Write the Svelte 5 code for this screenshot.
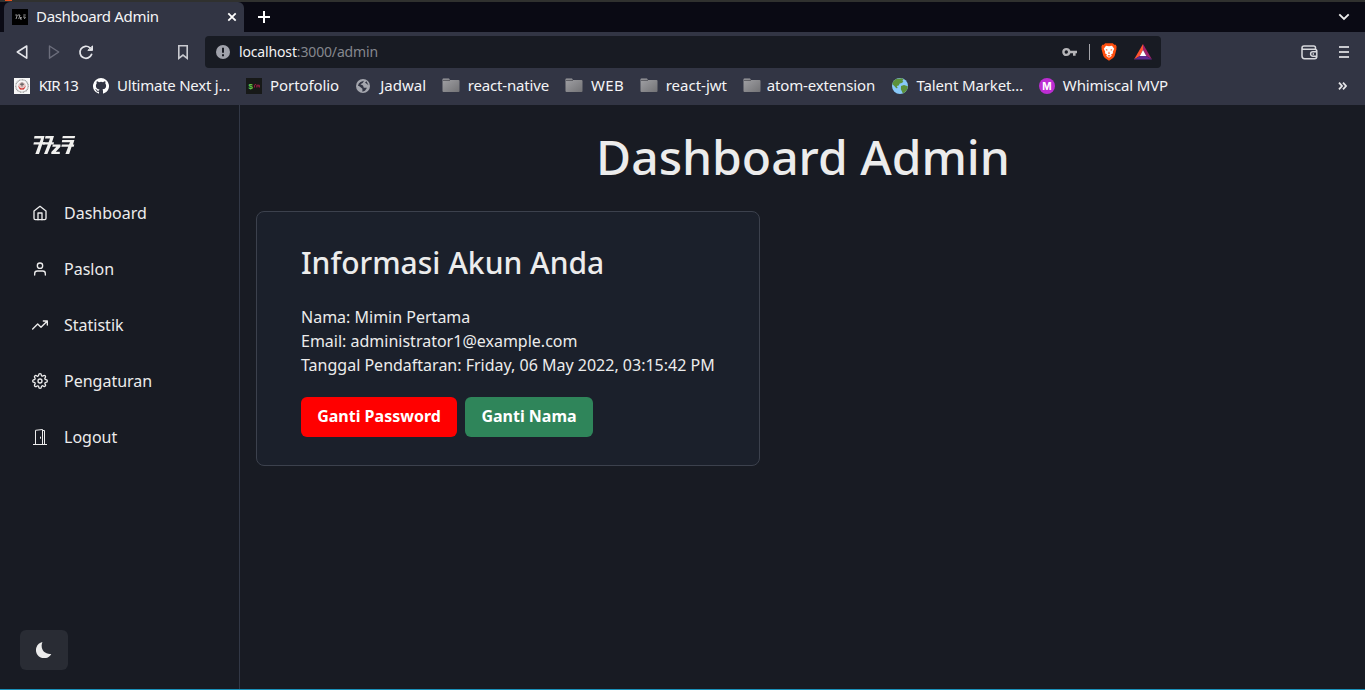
<script>
  const nav = ['Dashboard', 'Paslon', 'Statistik', 'Pengaturan', 'Logout'];
  const marks = [
    { t: 'KIR 13', k: 'kir', w: 64, g: 15, s: -0.9 },
    { t: 'Ultimate Next j…', k: 'git', w: 137, g: 16, s: -0.25 },
    { t: 'Portofolio', k: 'term', w: 93, g: 16, s: -0.1 },
    { t: 'Jadwal', k: 'globe', w: 71, g: 16, s: 0 },
    { t: 'react-native', k: 'folder', w: 107, g: 16, s: -0.16 },
    { t: 'WEB', k: 'folder', w: 59, g: 16, s: 0.3 },
    { t: 'react-jwt', k: 'folder', w: 87, g: 16, s: 0 },
    { t: 'atom-extension', k: 'folder', w: 132, g: 17, s: -0.16 },
    { t: 'Talent Market…', k: 'earth', w: 131, g: 16, s: -0.14 },
    { t: 'Whimiscal MVP', k: 'm', w: 129, g: 0, s: -0.16 }
  ];
</script>

<div class="screen">
  <div class="desktop"><i></i></div>
  <div class="tabs">
    <div class="tab">
      <svg class="fav" width="16" height="16" viewBox="0 0 16 16"><path fill="#000" d="M0 0h16v16H0z"/><path d="M3.3 6h2L4 10M6 6h2L6.7 10M8 8.5h1.5L8 10h2M11.3 6h2.4M11 8h2.4l-1 2" fill="none" stroke="#aaa" stroke-width=".9"/></svg>
      <span>Dashboard Admin</span>
      <svg class="close" width="10" height="10" viewBox="0 0 10 10"><path d="M1.3 1.3l7.4 7.4M8.7 1.3L1.3 8.7" stroke="#fff" stroke-width="1.8"/></svg>
    </div>
    <svg class="plus" width="14" height="14" viewBox="0 0 14 14"><path d="M7 1v12M1 7h12" stroke="#fff" stroke-width="2"/></svg>
    <svg class="chev" width="12" height="8" viewBox="0 0 12 8"><path d="M1.3 1.3L6 6l4.7-4.7" fill="none" stroke="#eee" stroke-width="1.8"/></svg>
  </div>
  <div class="toolbar">
    <svg class="controls" width="205" height="40" viewBox="0 0 205 40" fill="none" stroke="#e4e5ea" stroke-width="1.6" stroke-linejoin="round" stroke-linecap="round">
      <path d="M26.7 14v12.2L17.3 20z"/>
      <path d="M49.5 14v12.2L58.7 20z" stroke="#6c6e7c" stroke-width="1.4"/>
      <path d="M91.6 22.4A6 6 0 1 1 90 15.8" stroke-width="1.7"/>
      <path d="M88.2 18.4h4.3v-4.1z" fill="#e4e5ea" stroke-width="1"/>
      <path d="M178.8 13.8h8.4v12.5L183 23l-4.2 3.3z" stroke="#c9cad0" stroke-linejoin="miter"/>
    </svg>
    <div class="address">
      <svg width="14" height="14" viewBox="0 0 14 14"><circle cx="7" cy="7" r="7" fill="#a0a2ab"/><path d="M7 2.7v5.1M7 9.3v2" stroke="#181b23" stroke-width="2"/></svg>
      <span class="url">localhost<em>:3000/admin</em></span>
      <svg class="key" width="15" height="10" viewBox="0 0 15 10"><circle cx="4.3" cy="5" r="2.9" fill="none" stroke="#b5b5b8" stroke-width="2.4"/><path d="M7 5h8M12.3 5v3.8" stroke="#b5b5b8" stroke-width="2.6"/></svg>
      <b class="divider"></b>
      <svg class="lion" width="16" height="18" viewBox="0 0 16 18"><path d="M4.2.2h7.6l1.5 1.6 1.5-.1.9 2.2-.4 1 .2 1-1.7 6.7c-.3 1-.8 1.7-1.7 2.3L8 17.8l-4.1-2.9c-.9-.6-1.4-1.3-1.7-2.3L.5 5.9l.2-1-.4-1 .9-2.2 1.5.1z" fill="#ff4f0f"/><path d="M8 3.3l3-.5 2.2 2.9-1.4 3 .2 1.6-2.1 1.5 1 .9L8 14.8l-2.9-2.1 1-.9L4 10.3l.2-1.6-1.4-3L5 2.8z" fill="#fff"/><path d="M4.6 6.1l2 .7-.7 1.2zM11.4 6.1l-2 .7.7 1.2zM8 8.2l.8 2.3L8 11l-.8-.5zM6.4 12.7L8 12l1.6.7L8 13.7z" fill="#ff4f0f"/></svg>
      <svg class="bat" width="18" height="16" viewBox="0 0 18 16"><path d="M9 0L0 15.5 5.8 12 9 6z" fill="#ff5330"/><path d="M9 0l9 15.5-5.7-3.5L9 6z" fill="#a1226c"/><path d="M0 15.5L5.8 12h6.5l5.7 3.5z" fill="#5e2b91"/><path d="M9 6l3.3 6H5.8z" fill="#fff"/></svg>
    </div>
    <svg class="wallet" width="17" height="15" viewBox="0 0 17 15" fill="none" stroke="#d8d9dd" stroke-width="1.5"><path d="M14.5 4.5V2.7q0-1.7-1.7-1.7H3Q1 1 1 3v8q0 2.7 2.6 2.7h10q2.2 0 2.2-2.2V6.3q0-2-2-2H3Q1 4.3 1 3"/><path d="M16 6.8h-4.2a2.2 2.2 0 0 0 0 4.4H16M11.6 9h1.4"/></svg>
    <svg class="menu" width="10" height="12" viewBox="0 0 10 12"><path d="M0 1h10M0 6h10M0 11h10" stroke="#c9cacf" stroke-width="1.8"/></svg>
  </div>
  <div class="bookmarks">
    {#each marks as m}
      <div class="mark" style="width:{m.w}px;margin-right:{m.g}px">
        {#if m.k === 'folder'}
          <svg width="18" height="16" viewBox="0 0 18 16"><defs><linearGradient id="fg" x2="1" y2="1"><stop stop-color="#a1a1a5"/><stop offset="1" stop-color="#737376"/></linearGradient></defs><path d="M.5 3V1.6q0-1 1-1H7l1 1.3h8.5q1 0 1 1v10q0 1-1 1h-15q-1 0-1-1z" fill="url(#fg)"/><path d="M1 2.3h7" stroke="#505157"/></svg>
        {:else}
          <svg width="16" height="16" viewBox="0 0 16 16">
            {#if m.k === 'kir'}
              <path fill="#f7f7f7" d="M0 0h16v16H0z"/><circle cx="8" cy="8" r="6.2" fill="none" stroke="#999" stroke-width="1.3" stroke-dasharray="1 .5"/><circle cx="8" cy="8" r="3.7" fill="#e3c5c2"/><path d="M3.8 7.5q4.2 6 8.4 0l-2.4 4H6z" fill="#d52924"/><path d="M6 6.2h4M8 4.5v4" stroke="#555"/>
            {:else if m.k === 'git'}
              <path fill="#fff" d="M8 0a8 8 0 0 0-2.53 15.59c.4.07.55-.17.55-.38v-1.49c-2.23.49-2.7-.95-2.7-.95-.36-.93-.89-1.17-.89-1.17-.73-.5.05-.49.05-.49.81.06 1.23.83 1.23.83.72 1.23 1.88.88 2.34.67.07-.52.28-.88.51-1.08-1.78-.2-3.65-.89-3.65-3.95 0-.88.31-1.59.82-2.15-.08-.2-.36-1.02.08-2.12 0 0 .67-.21 2.2.82a7.6 7.6 0 0 1 4 0c1.53-1.04 2.2-.82 2.2-.82.44 1.1.16 1.92.08 2.12.51.56.82 1.27.82 2.15 0 3.07-1.87 3.75-3.66 3.95.29.25.54.73.54 1.48v2.2c0 .21.15.46.55.38A8 8 0 0 0 8 0"/>
            {:else if m.k === 'term'}
              <path fill="#171918" d="M0 0h16v16H0z"/><text x="2.3" y="10.5" class="dollar">$</text><path d="M8.5 9.5V7.2q0-.7 1.6-.7M10.8 9.5V7.2h2.6v2.3M12.1 7.2v2" fill="none" stroke="#981b42"/>
            {:else if m.k === 'globe'}
              <circle cx="8" cy="8" r="7" fill="#a4a6ae"/><path d="M3 8q0-2.6 2.5-4L9 2.7 7.7 5 5.4 6.3 8 7.5l.8 2.2H12l-2 3-2.6 1v-3L4 8zM10 4.5l1.5-1.2 2 4z" fill="#323544"/>
            {:else if m.k === 'earth'}
              <circle cx="8" cy="8" r="8" fill="#88c9f9"/><path d="M4 1.1L9.6.2l2 1-1.2 1.6 1 .9-1.7 1.4-2 .4-1 2-2 .4 1 2-1.4.3-2-2.2L.2 6A8 8 0 0 1 4 1.1M9 8l3-1 3.8 1.3a8 8 0 0 1-5 7.1L9.7 13l-.8-1.7z" fill="#5c913b"/>
            {:else}
              <circle cx="8" cy="8" r="8" fill="#bd2dd3"/><text x="8" y="11.5" class="em">M</text>
            {/if}
          </svg>
        {/if}
        <span style="letter-spacing:{m.s}px">{m.t}</span>
      </div>
    {/each}
    <svg class="more" width="9" height="8" viewBox="0 0 9 8"><path d="M1 .7L4 4 1 7.3M5 .7L8 4 5 7.3" fill="none" stroke="#e5e5e8" stroke-width="1.8"/></svg>
  </div>

  <div class="app">
    <aside>
      <svg class="logo" width="44" height="22" viewBox="0 0 44 22" fill="#f0f0ee">
        <path d="M2.5 2H12.5L10.9 8.3H13.2L12.7 10.5H10.2L7 20H3.3L6.8 10.5H1.4L1.9 8.3H7.6L9 4.5H2z"/>
        <path d="M13.5 2H22L20 8.3H22L21.5 10.5H19.3L15.4 20H12L15.8 10.5H11V8.3H16.6L18 4.5H13z"/>
        <path d="M20.8 10.5H28.5V12.8L23.8 17.7H27.8V20H19.3V17.9L24.3 12.8H20.3z"/>
        <path d="M30.8 2H43.2L42.6 4.2H30.3zM30.2 6H42.4L41 10.6H42.3L41.7 12.8H39.6L37.2 20H33.4L36.2 12.8H29.3L29.8 10.6H37L38 8.2H29.8z"/>
      </svg>
      <nav>
        {#each nav as item, i}
          <a href="#{item}">
            {#if i === 4}
              <svg width="16" height="16" viewBox="0 0 16 16" fill="none" stroke="#ececec" stroke-width="1"><path d="M1 15.5h14M3.5 15.5V1.3L10.5.5v15M10.5 1.5h2v14"/><path d="M8.5 7.7v2"/></svg>
            {:else}
              <svg width="16" height="16" viewBox="0 0 24 24" fill="none" stroke="#ececec" stroke-width="2" stroke-linecap="round" stroke-linejoin="round">
                {#if i === 0}<path d="M3 9l9-7 9 7v11a2 2 0 0 1-2 2H5a2 2 0 0 1-2-2z"/><path d="M9 22V12h6v10"/>
                {:else if i === 1}<circle cx="12" cy="7" r="4"/><path d="M20 21v-2a4 4 0 0 0-4-4H8a4 4 0 0 0-4 4v2"/>
                {:else if i === 2}<path d="M23 6l-9.5 9.5-5-5L1 18M17 6h6v6"/>
                {:else}<circle cx="12" cy="12" r="3"/><path d="M19.4 15a1.65 1.65 0 0 0 .33 1.82l.06.06a2 2 0 0 1 0 2.83 2 2 0 0 1-2.83 0l-.06-.06a1.65 1.65 0 0 0-1.82-.33 1.65 1.65 0 0 0-1 1.51V21a2 2 0 0 1-2 2 2 2 0 0 1-2-2v-.09A1.65 1.65 0 0 0 9 19.4a1.65 1.65 0 0 0-1.82.33l-.06.06a2 2 0 0 1-2.83 0 2 2 0 0 1 0-2.83l.06-.06a1.65 1.65 0 0 0 .33-1.82 1.65 1.65 0 0 0-1.51-1H3a2 2 0 0 1-2-2 2 2 0 0 1 2-2h.09A1.65 1.65 0 0 0 4.6 9a1.65 1.65 0 0 0-.33-1.82l-.06-.06a2 2 0 0 1 0-2.83 2 2 0 0 1 2.83 0l.06.06a1.65 1.65 0 0 0 1.82.33H9a1.65 1.65 0 0 0 1-1.51V3a2 2 0 0 1 2-2 2 2 0 0 1 2 2v.09a1.65 1.65 0 0 0 1 1.51 1.65 1.65 0 0 0 1.82-.33l.06-.06a2 2 0 0 1 2.83 0 2 2 0 0 1 0 2.83l-.06.06a1.65 1.65 0 0 0-.33 1.82V9a1.65 1.65 0 0 0 1.51 1H21a2 2 0 0 1 2 2 2 2 0 0 1-2 2h-.09a1.65 1.65 0 0 0-1.51 1z"/>{/if}
              </svg>
            {/if}
            <span>{item}</span>
          </a>
        {/each}
      </nav>
      <button class="theme" aria-label="Theme"><svg width="16" height="16" viewBox="0 0 16 16"><path d="M6.4 0A8.2 8.2 0 1 0 15.3 12C8.6 12.9 3.7 7 6.4 0z" fill="#ececec"/></svg></button>
    </aside>
    <main>
      <h1>Dashboard Admin</h1>
      <section>
        <h2>Informasi Akun Anda</h2>
        <p>Nama: Mimin Pertama</p>
        <p>Email: administrator1@example.com</p>
        <p>Tanggal Pendaftaran: Friday, 06 May 2022, 03:15:42 PM</p>
        <div class="actions"><button class="red">Ganti Password</button><button class="green">Ganti Nama</button></div>
      </section>
    </main>
  </div>
  <div class="edge"></div>
</div>

<style>
  :global(body) { margin: 0; background: #181b23; overflow: hidden; }
  * { box-sizing: border-box; }
  svg { display: block; flex: none; }
  .screen { width: 1365px; height: 690px; display: flex; flex-direction: column; font-family: "Noto Sans", sans-serif; color: #ececec; overflow: hidden; }
  .desktop { height: 2px; background: #30312f; flex: none; }
  .desktop i { display: block; width: 7px; height: 1px; margin-left: 5px; background: #e95420; }
  .tabs { height: 30px; flex: none; background: #0a0a14; display: flex; align-items: center; padding-left: 4px; }
  .tab { width: 240px; height: 30px; background: #323544; border-radius: 6px 6px 0 0; display: flex; align-items: center; padding: 0 7px 0 8px; font-size: 15px; color: #f4f4f6; }
  .tab span { margin-left: 8px; padding-bottom: 2px; letter-spacing: -.32px; }
  .close { margin-left: auto; }
  .plus { margin-left: 13px; }
  .chev { margin-left: auto; margin-right: 15px; }
  .toolbar { height: 40px; flex: none; background: #323544; display: flex; align-items: center; }
  .address { height: 32px; width: 956px; background: #181b23; border-radius: 4px; display: flex; align-items: center; padding: 0 9px 0 11px; }
  .url { font-size: 14px; margin-left: 9px; color: #f2f2f4; padding-bottom: 2px; letter-spacing: -.15px; }
  .url em { font-style: normal; color: #85878e; }
  .key { margin-left: auto; }
  .divider { width: 1px; height: 16px; background: #a4a5aa; margin: 0 11px 0 12px; }
  .bat { margin-left: 17px; }
  .wallet { margin-left: 140px; }
  .menu { margin-left: 21px; }
  .bookmarks { height: 33px; flex: none; background: #323544; display: flex; align-items: center; padding: 0 18px 5px 14px; font-size: 15px; color: #f4f4f6; }
  .mark { display: flex; align-items: center; justify-content: space-between; white-space: nowrap; flex: none; }
  .mark span { padding-bottom: 2px; }
  .more { margin-left: auto; }
  .dollar { fill: #63c94b; font: bold 8px "Liberation Mono", monospace; }
  .em { fill: #fff; font: bold 10px Inter, sans-serif; text-anchor: middle; }
  .app { flex: 1; display: flex; background: #181b23; min-height: 0; }
  aside { width: 240px; border-right: 1px solid #323846; display: flex; flex-direction: column; padding: 29px 20px 19px; }
  .logo { margin-left: 12px; }
  nav { margin: 37px 0 0 12px; display: flex; flex-direction: column; gap: 16px; }
  nav a { height: 40px; display: flex; align-items: center; gap: 16px; font-size: 16px; color: #ececec; text-decoration: none; }
  .theme { width: 48px; height: 40px; margin-top: auto; border: 0; border-radius: 6px; background: #292c34; display: grid; place-items: center; padding: 0; }
  main { flex: 1; padding: 23px 0 0 16px; }
  h1 { margin: 0 15px 0 0; text-align: center; font-size: 48px; line-height: 58px; font-weight: 500; }
  section { width: 504px; height: 255px; margin-top: 25px; border: 1px solid #3c414d; border-radius: 8px; background: #1b202b; padding: 33px 44px 0; }
  h2 { margin: 0 0 24px; font-size: 30px; line-height: 36px; font-weight: 500; }
  p { margin: 0; font-size: 16px; line-height: 24px; white-space: nowrap; }
  .actions { display: flex; gap: 8px; margin-top: 20px; }
  .actions button { height: 40px; padding: 0 0 2px; border: 0; border-radius: 6px; color: #fff; font: 700 16px "Noto Sans", sans-serif; }
  .red { width: 156px; background: #f00; }
  .green { width: 128px; background: #2f855a; }
  .edge { height: 1px; flex: none; background: #1a92ba; }
</style>
